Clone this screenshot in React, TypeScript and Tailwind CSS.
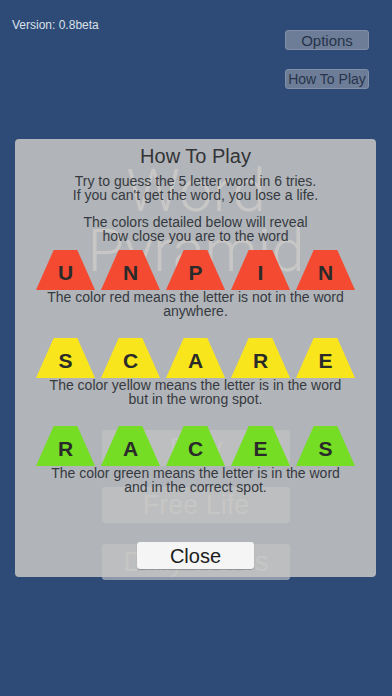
import React from "react";

const font = { fontFamily: '"Liberation Sans", Arial, sans-serif' };

type TileColor = "red" | "yellow" | "green";

const bgFor: Record<TileColor, string> = {
  red: "bg-[#f44a31]",
  yellow: "bg-[#f8e51c]",
  green: "bg-[#74dd24]",
};

function Tile({ letter, color }: { letter: string; color: TileColor }) {
  return (
    <div
      className={`w-[59px] h-[40px] flex items-center justify-center pt-[4px] ${bgFor[color]} [clip-path:polygon(30%_0,70%_0,100%_100%,0_100%)]`}
    >
      <span className="text-[21px] font-bold leading-none text-[#2a2a2a]">{letter}</span>
    </div>
  );
}

function Row({ word, color }: { word: string; color: TileColor }) {
  return (
    <div className="flex justify-center gap-[6px]">
      {word.split("").map((l, i) => (
        <Tile key={i} letter={l} color={color} />
      ))}
    </div>
  );
}

export default function App() {
  return (
    <div className="relative h-[696px] w-[392px] overflow-hidden bg-[#2e4b78]" style={font}>
      {/* background main menu */}
      <div className="flex justify-between">
        <div className="pl-3 pt-[18px] text-[12px] leading-[14px] text-[#dbe0e8]">Version: 0.8beta</div>
        <div className="flex flex-col gap-[19px] pr-[23px] pt-[30px]">
          <div className="flex h-[20px] w-[84px] items-center justify-center rounded-[3px] border border-[#8190a8] bg-[#6d7d98] text-[15px] leading-none text-[#27344a]">
            Options
          </div>
          <div className="flex h-[20px] w-[84px] items-center justify-center rounded-[3px] border border-[#8190a8] bg-[#6d7d98] text-[14px] leading-none text-[#27344a] whitespace-nowrap">
            How To Play
          </div>
        </div>
      </div>
      <div
        className="mt-[72px] text-center text-[60px] font-light leading-[60px] text-[#e2e4e7]"
        style={{ fontFamily: 'Roboto, "Liberation Sans", sans-serif' }}
      >
        <div>Word</div>
        <div>Pyramid</div>
      </div>
      <div className="mx-auto mt-[149px] flex w-[188px] flex-col gap-[21px]">
        <div className="flex h-[36px] items-center justify-center rounded-[3px] bg-[#8e99ab] text-[27px] text-[#d6d8da]">Play</div>
        <div className="flex h-[36px] items-center justify-center rounded-[3px] bg-[#8e99ab] text-[27px] text-[#d6d8da]">Free Life</div>
        <div className="flex h-[36px] items-center justify-center rounded-[3px] bg-[#8e99ab] text-[27px] text-[#d6d8da]">Daily Words</div>
      </div>

      {/* How To Play modal */}
      <div className="absolute left-[15px] top-[139px] flex h-[438px] w-[361px] flex-col items-center rounded-[4px] bg-[rgba(196,195,194,0.88)] pt-[5px] text-center text-[#363a40]">
        <div className="text-[20px] leading-[24px] text-[#333437]">How To Play</div>
        <div className="mt-[6px] text-[14px] leading-[14px]">
          <div>Try to guess the 5 letter word in 6 tries.</div>
          <div>If you can't get the word, you lose a life.</div>
        </div>
        <div className="mt-[13px] text-[14px] leading-[14px]">
          <div>The colors detailed below will reveal</div>
          <div>how close you are to the word</div>
        </div>
        <div className="mt-[7px] w-full">
          <Row word="UNPIN" color="red" />
        </div>
        <div className="text-[14px] leading-[14px]">
          <div>The color red means the letter is not in the word</div>
          <div>anywhere.</div>
        </div>
        <div className="mt-[20px] w-full">
          <Row word="SCARE" color="yellow" />
        </div>
        <div className="text-[14px] leading-[14px]">
          <div>The color yellow means the letter is in the word</div>
          <div>but in the wrong spot.</div>
        </div>
        <div className="mt-[20px] w-full">
          <Row word="RACES" color="green" />
        </div>
        <div className="text-[14px] leading-[14px]">
          <div>The color green means the letter is in the word</div>
          <div>and in the correct spot.</div>
        </div>
        <div className="mt-[48px] flex h-[27px] w-[117px] items-center justify-center rounded-[3px] bg-[#f5f5f5] text-[20px] leading-none text-[#1b1b1b] shadow-[0_1px_1px_rgba(0,0,0,0.25)]">
          Close
        </div>
      </div>
    </div>
  );
}
